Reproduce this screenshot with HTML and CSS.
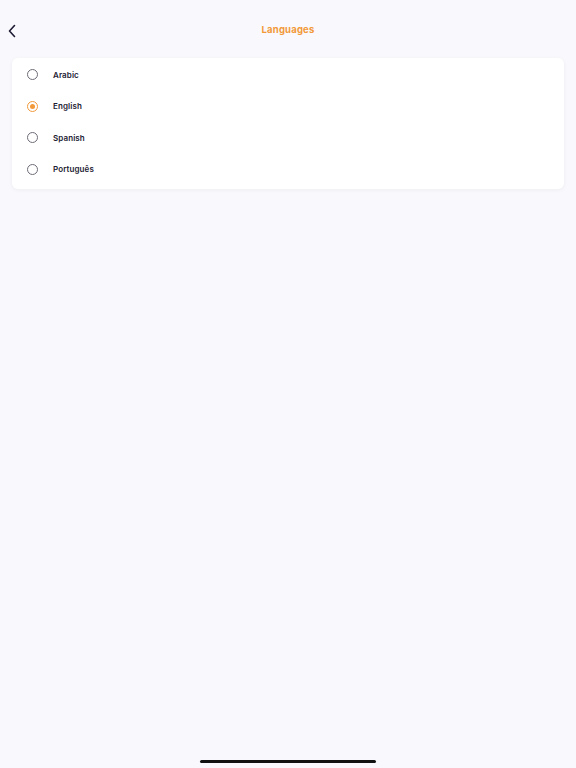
FILE: index.html
```html
<!DOCTYPE html>
<html lang="en">
<head>
    <meta charset="UTF-8">
    <meta name="viewport" content="width=device-width, initial-scale=1.0">
    <title>Languages</title>
    <link rel="stylesheet" href="styles.css">
</head>
<body>
    <div class="header">
        <span class="back">
            <svg width="10" height="14" viewBox="0 0 10 14"><path d="M7.5 1.5L2.5 7l5 5.5" fill="none" stroke="#1c1b33" stroke-width="1.6" stroke-linecap="round" stroke-linejoin="round"/></svg>
        </span>
        <h1 class="title">Languages</h1>
    </div>

    <div class="card">
        <div class="row"><span class="radio"></span><span class="label">Arabic</span></div>
        <div class="row"><span class="radio checked"></span><span class="label">English</span></div>
        <div class="row"><span class="radio"></span><span class="label">Spanish</span></div>
        <div class="row"><span class="radio"></span><span class="label">Português</span></div>
    </div>

    <div class="home-bar"></div>
</body>
</html>
```

FILE: styles.css
```css
body {
    margin: 0;
    height: 768px;
    background: #f9f8fc;
    font-family: "Inter", "Open Sans", sans-serif;
    color: #1c1b33;
    position: relative;
    overflow: hidden;
}
.header {
    height: 58px;
    display: flex;
    align-items: center;
    justify-content: center;
    position: relative;
}
.back {
    position: absolute;
    left: 7px;
    top: 22px;
    width: 10px;
    height: 14px;
}
.title {
    margin: 0;
    font-size: 9.5px;
    font-weight: 700;
    color: #f2993a;
    letter-spacing: 0.2px;
}
.card {
    margin: 0 12px;
    background: #ffffff;
    border-radius: 6px;
    padding: 1px 0 4px;
    box-shadow: 0 1px 4px rgba(30, 30, 60, 0.05);
}
.row {
    height: 31.5px;
    display: flex;
    align-items: center;
    padding-left: 15px;
}
.radio {
    width: 9px;
    height: 9px;
    border: 1px solid #6e6d78;
    border-radius: 50%;
    margin-right: 15px;
    box-sizing: content-box;
    position: relative;
}
.radio.checked {
    border-color: #f2993a;
}
.radio.checked::after {
    content: "";
    position: absolute;
    left: 2px;
    top: 2px;
    width: 5px;
    height: 5px;
    border-radius: 50%;
    background: #f2993a;
}
.label {
    font-size: 8px;
    font-weight: 600;
    letter-spacing: 0.1px;
}
.home-bar {
    position: absolute;
    left: 200px;
    bottom: 5px;
    width: 176px;
    height: 3px;
    border-radius: 2px;
    background: #111111;
}
```
